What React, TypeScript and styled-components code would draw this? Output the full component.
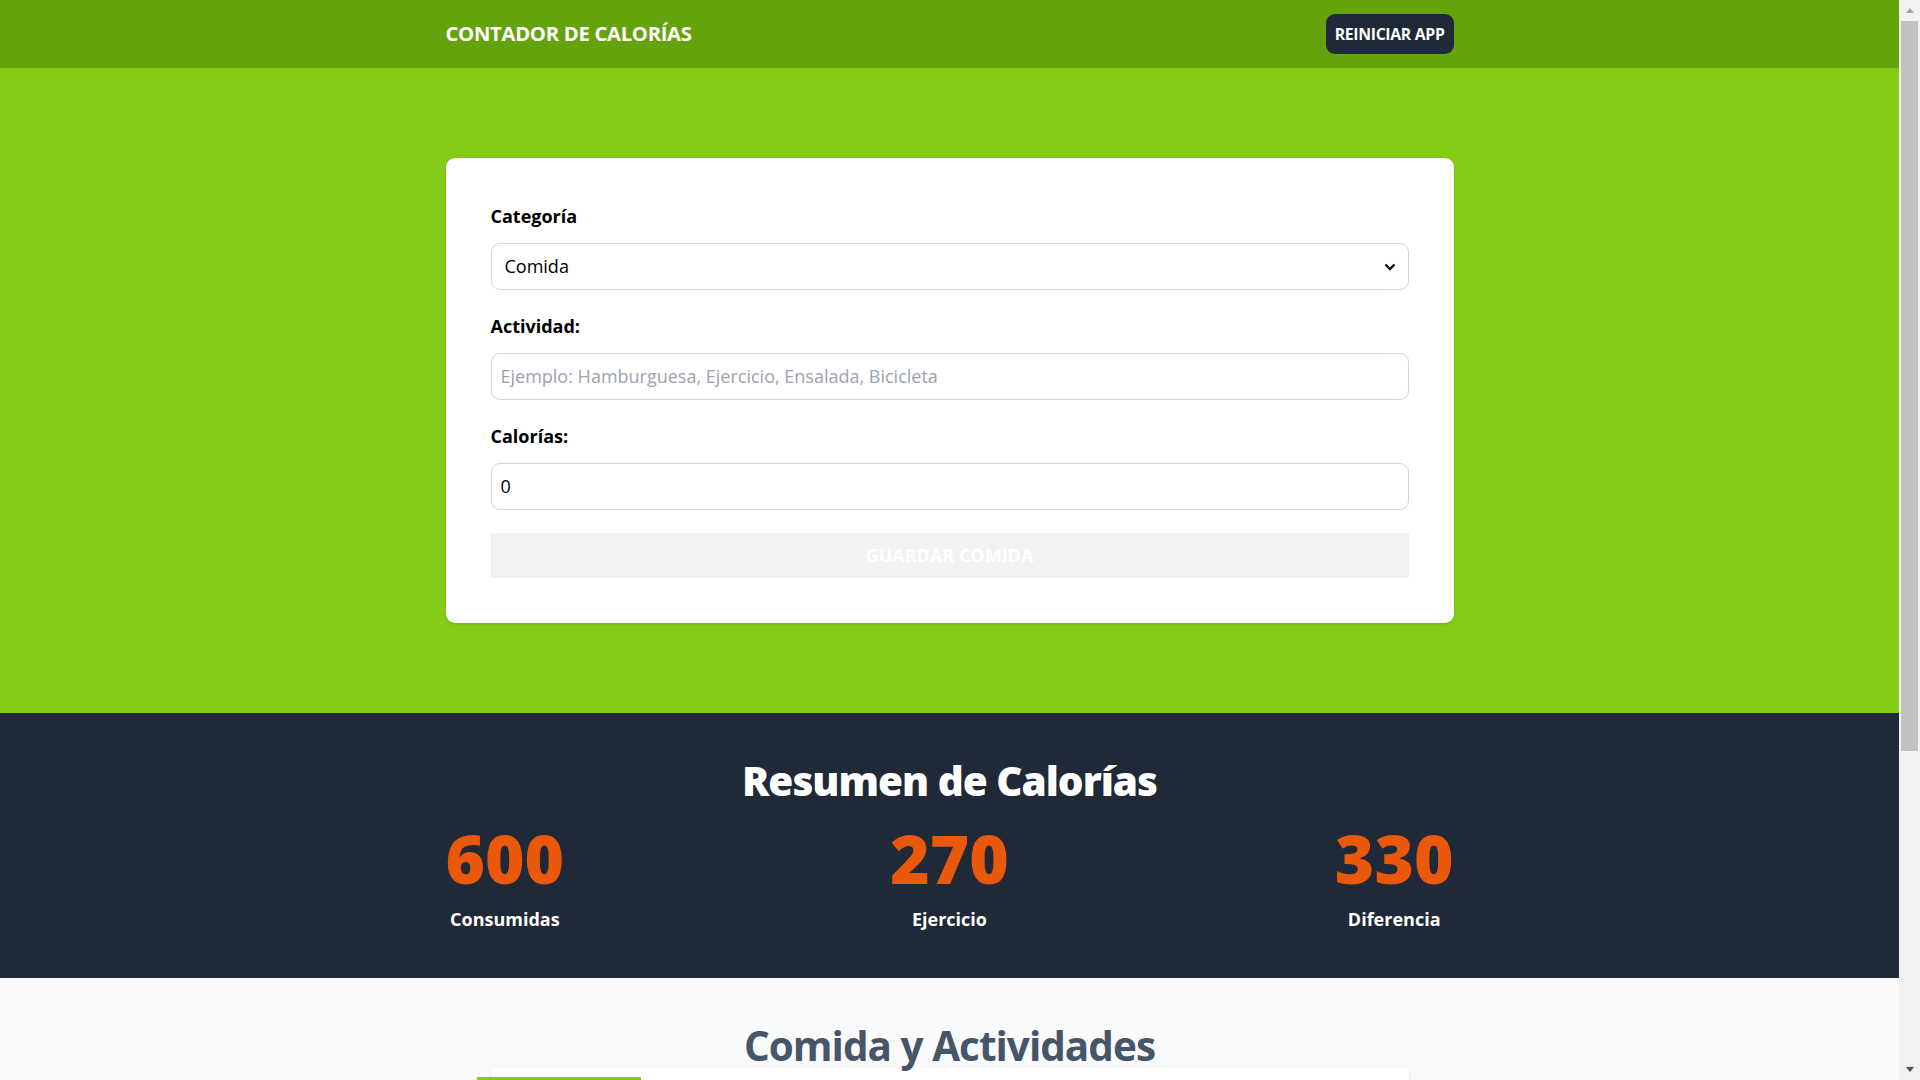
import React from 'react';
import styled, { createGlobalStyle } from 'styled-components';
import { SquarePen, CircleX } from 'lucide-react';

type Activity = {
  id: number;
  category: 1 | 2;
  name: string;
  calories: number;
};

const activities: Activity[] = [
  { id: 1, category: 1, name: 'Hamburguesa', calories: 600 },
  { id: 2, category: 2, name: 'Bicicleta', calories: 270 },
];

const consumed = activities.filter((a) => a.category === 1).reduce((t, a) => t + a.calories, 0);
const burned = activities.filter((a) => a.category === 2).reduce((t, a) => t + a.calories, 0);

const GlobalStyle = createGlobalStyle`
  html {
    font-size: 18px;
  }

  * {
    box-sizing: border-box;
  }

  html,
  body {
    height: 100%;
    overflow: hidden;
  }

  body {
    margin: 0;
    background-color: #f8fafc;
    font-family: 'Open Sans', 'Noto Sans', 'Liberation Sans', sans-serif;
    line-height: 1.5;
    color: #000;
  }

  input::-webkit-outer-spin-button,
  input::-webkit-inner-spin-button {
    -webkit-appearance: none;
    margin: 0;
  }
`;

const App: React.FC = () => {
  return (
    <Page>
      <GlobalStyle />
      <Content>
        <Header>
          <Container $row>
            <Title>Contador de Calorías</Title>
            <ResetButton type="button">Reiniciar App</ResetButton>
          </Container>
        </Header>

        <FormSection>
          <Container>
            <Form onSubmit={(e) => e.preventDefault()}>
              <Field>
                <Label htmlFor="category">Categoría</Label>
                <SelectWrap>
                  <Select id="category" defaultValue="1">
                    <option value="1">Comida</option>
                    <option value="2">Ejercicio</option>
                  </Select>
                  <Chevron width="12" height="8" viewBox="0 0 12 8">
                    <path d="M1.5 1.5 L6 6 L10.5 1.5" fill="none" stroke="#111" strokeWidth="2.4" />
                  </Chevron>
                </SelectWrap>
              </Field>

              <Field>
                <Label htmlFor="name">Actividad:</Label>
                <Input
                  id="name"
                  type="text"
                  placeholder="Ejemplo: Hamburguesa, Ejercicio, Ensalada, Bicicleta"
                />
              </Field>

              <Field>
                <Label htmlFor="calories">Calorías:</Label>
                <Input id="calories" type="number" defaultValue={0} />
              </Field>

              <SubmitButton type="submit" disabled>
                Guardar Comida
              </SubmitButton>
            </Form>
          </Container>
        </FormSection>

        <SummarySection>
          <Container>
            <SummaryTitle>Resumen de Calorías</SummaryTitle>
            <Stats>
              <Stat>
                <StatNumber>{consumed}</StatNumber>
                Consumidas
              </Stat>
              <Stat>
                <StatNumber>{burned}</StatNumber>
                Ejercicio
              </Stat>
              <Stat>
                <StatNumber>{consumed - burned}</StatNumber>
                Diferencia
              </Stat>
            </Stats>
          </Container>
        </SummarySection>

        <ListSection>
          <ListTitle>Comida y Actividades</ListTitle>
          {activities.map((activity) => (
            <ActivityCard key={activity.id}>
              <ActivityInfo>
                <Badge $food={activity.category === 1}>
                  {activity.category === 1 ? 'Comida' : 'Ejercicio'}
                </Badge>
                <ActivityName>{activity.name}</ActivityName>
                <ActivityCalories>
                  {activity.calories} <span>Calorías</span>
                </ActivityCalories>
              </ActivityInfo>
              <Actions>
                <IconButton type="button">
                  <SquarePen size={36} color="#1f2937" />
                </IconButton>
                <IconButton type="button">
                  <CircleX size={36} color="#ef4444" />
                </IconButton>
              </Actions>
            </ActivityCard>
          ))}
        </ListSection>
      </Content>

      <ScrollTrack aria-hidden>
        <ScrollArrow $up />
        <ScrollThumb />
        <ScrollArrow />
      </ScrollTrack>
    </Page>
  );
};
export default App;

const Page = styled.div`
  display: flex;
  height: 100vh;
`;

const Content = styled.div`
  flex: 1;
  min-width: 0;
  overflow-y: auto;
  scrollbar-width: none;

  &::-webkit-scrollbar {
    display: none;
  }
`;

const ScrollTrack = styled.div`
  display: flex;
  flex-direction: column;
  justify-content: space-between;
  flex-shrink: 0;
  width: 21px;
  background-color: #f1f1f1;
`;

const ScrollArrow = styled.div<{ $up?: boolean }>`
  display: flex;
  align-items: center;
  justify-content: center;
  height: 21px;

  &::before {
    content: '';
    border-left: 4.5px solid transparent;
    border-right: 4.5px solid transparent;
    ${({ $up }) =>
      $up ? 'border-bottom: 5px solid #a3a3a3;' : 'border-top: 5px solid #505050;'}
  }
`;

const ScrollThumb = styled.div`
  height: 730px;
  margin: 0 2px;
  background-color: #c1c1c1;
  margin-bottom: auto;
`;

const Container = styled.div<{ $row?: boolean }>`
  max-width: 1008px;
  margin: 0 auto;
  ${({ $row }) =>
    $row &&
    `
    display: flex;
    justify-content: space-between;
    align-items: center;
  `}
`;

const Header = styled.header`
  background-color: #65a30d;
  padding: 13.5px 0;
`;

const Title = styled.h1`
  margin: 0;
  font-size: 20.25px;
  line-height: 31.5px;
  font-weight: 700;
  text-transform: uppercase;
  letter-spacing: -0.3px;
  color: #fff;
`;

const ResetButton = styled.button`
  padding: 9px;
  border: none;
  border-radius: 9px;
  background-color: #1f2937;
  color: #fff;
  font-family: inherit;
  font-size: 15.75px;
  line-height: 22.5px;
  font-weight: 700;
  text-transform: uppercase;
  letter-spacing: -0.3px;
  cursor: pointer;
`;

const FormSection = styled.section`
  background-color: #84cc16;
  padding: 90px 22.5px;
`;

const Form = styled.form`
  display: flex;
  flex-direction: column;
  gap: 22.5px;
  padding: 45px;
  border-radius: 9px;
  background-color: #fff;
  box-shadow: 0 1px 3px 0 rgba(0, 0, 0, 0.1), 0 1px 2px -1px rgba(0, 0, 0, 0.1);
`;

const Field = styled.div`
  display: grid;
  gap: 13.5px;
`;

const Label = styled.label`
  font-size: 18px;
  line-height: 27px;
  font-weight: 700;
`;

const SelectWrap = styled.div`
  position: relative;
`;

const Select = styled.select`
  width: 100%;
  padding: 9px 13px;
  border: 1px solid #cbd5e1;
  border-radius: 9px;
  background-color: #fff;
  font-family: inherit;
  font-size: 18px;
  line-height: 27px;
  color: #000;
  appearance: none;
`;

const Chevron = styled.svg`
  position: absolute;
  right: 13px;
  top: 20px;
  pointer-events: none;
`;

const Input = styled.input`
  width: 100%;
  padding: 9px;
  border: 1px solid #cbd5e1;
  border-radius: 9px;
  font-family: inherit;
  font-size: 18px;
  line-height: 27px;
  color: #000;

  &::placeholder {
    color: #9ca3af;
  }
`;

const SubmitButton = styled.button`
  width: 100%;
  padding: 9px;
  border: none;
  background-color: #f2f2f2;
  color: #fff;
  font-family: inherit;
  font-size: 18px;
  line-height: 27px;
  font-weight: 700;
  text-transform: uppercase;
`;

const SummarySection = styled.section`
  background-color: #1f2937;
  padding: 45px 0;
`;

const SummaryTitle = styled.h2`
  margin: 0;
  font-size: 40.5px;
  line-height: 45px;
  font-weight: 900;
  letter-spacing: -1px;
  color: #fff;
  text-align: center;
`;

const Stats = styled.div`
  display: flex;
  justify-content: space-between;
  gap: 22.5px;
  margin-top: 22.5px;
`;

const Stat = styled.p`
  display: grid;
  gap: 13.5px;
  margin: 0;
  color: #fff;
  font-size: 18px;
  line-height: 27px;
  font-weight: 700;
  text-align: center;
`;

const StatNumber = styled.span`
  font-size: 67.5px;
  line-height: 1;
  font-weight: 900;
  color: #ea580c;
`;

const ListSection = styled.section`
  max-width: 1008px;
  margin: 0 auto;
  padding: 45px;
`;

const ListTitle = styled.h2`
  margin: 0;
  font-size: 40.5px;
  line-height: 45px;
  font-weight: 700;
  letter-spacing: -1px;
  color: #475569;
  text-align: center;
`;

const ActivityCard = styled.div`
  display: flex;
  justify-content: space-between;
  padding: 45px 22.5px;
  background-color: #fff;
  box-shadow: 0 1px 3px 0 rgba(0, 0, 0, 0.1), 0 1px 2px -1px rgba(0, 0, 0, 0.1);

  & + & {
    margin-top: 22.5px;
  }
`;

const ActivityInfo = styled.div`
  position: relative;
  display: flex;
  flex-direction: column;
  gap: 9px;
`;

const Badge = styled.p<{ $food: boolean }>`
  position: absolute;
  top: -36px;
  left: -36px;
  margin: 0;
  padding: 9px 45px;
  background-color: ${({ $food }) => ($food ? '#84cc16' : '#f97316')};
  color: #fff;
  font-weight: 700;
  text-transform: uppercase;
  white-space: nowrap;
`;

const ActivityName = styled.p`
  margin: 0;
  padding-top: 22.5px;
  font-size: 27px;
  font-weight: 700;
`;

const ActivityCalories = styled.p`
  margin: 0;
  font-size: 40.5px;
  line-height: 45px;
  font-weight: 900;
  color: #84cc16;
`;

const Actions = styled.div`
  display: flex;
  align-items: center;
  gap: 22.5px;
`;

const IconButton = styled.button`
  padding: 0;
  border: none;
  background: none;
  cursor: pointer;
`;
